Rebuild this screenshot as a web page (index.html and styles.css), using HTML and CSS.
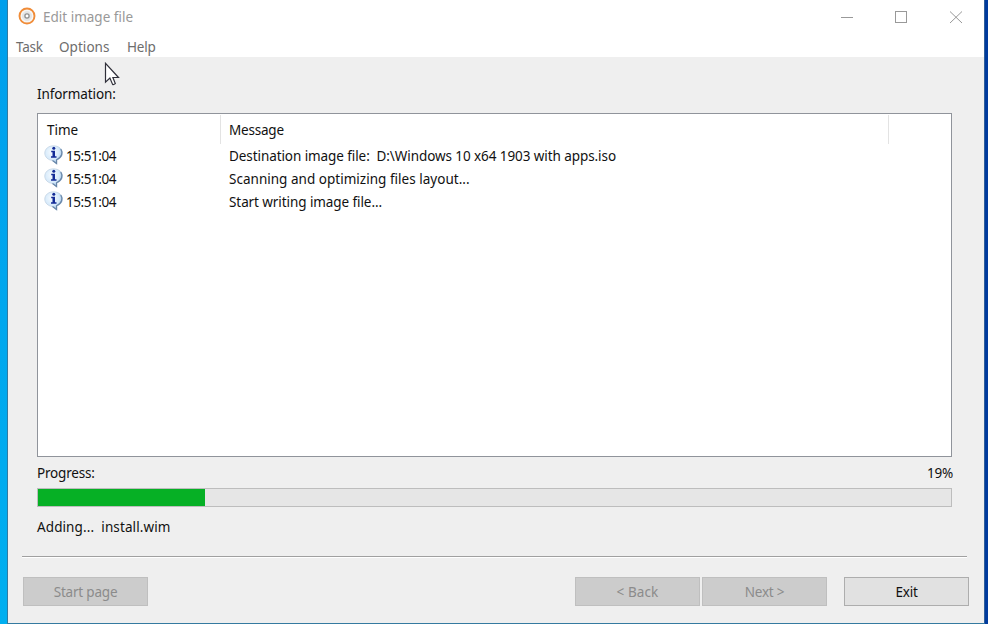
FILE: index.html
```html
<!DOCTYPE html>
<html lang="en">
<head>
<meta charset="utf-8">
<title>Edit image file</title>
<link rel="stylesheet" href="styles.css">
</head>
<body>
<svg class="defs" width="0" height="0" aria-hidden="true">
  <defs>
    <radialGradient id="bubble" cx="0.4" cy="0.35" r="0.7">
      <stop offset="0" stop-color="#f6fbff"/><stop offset="0.6" stop-color="#d5e9fa"/><stop offset="1" stop-color="#83afdb"/>
    </radialGradient>
    <symbol id="info" viewBox="0 0 20 20">
      <path d="M9.5 .8C4.500 .8 .8 4 .8 8.100C.8 12 4.100 15 8.200 15.400L12.300 18.800V15C16 14.100 18.500 11.500 18.500 8.100C18.500 4 14.600 .8 9.500 .8Z" fill="url(#bubble)" stroke="#c3d3e3" stroke-width=".8"/>
      <path d="M16.800 4C18.900 7.500 18.200 12.300 12.600 14.700V18.600L8.500 15.500" fill="none" stroke="#6886a8" stroke-width="1.200"/>
      <circle cx="9.800" cy="3.200" r="1.500" fill="#132b96"/>
      <path d="M7.200 5.800H11V11.300H12.500V12.700H7V11.300H8.500V7.200H7.200Z" fill="#132b96"/>
    </symbol>
  </defs>
</svg>
<div class="desktop">
  <main class="window">
    <header class="titlebar">
      <svg class="app-icon" width="18" height="18" viewBox="0 0 18 18">
        <circle cx="9" cy="9" r="7.500" fill="#f6f6f6" stroke="#f08c38" stroke-width="1.900"/>
        <circle cx="9" cy="9" r="4.600" fill="#e4e4e4" stroke="#e6e6e6" stroke-width="1"/>
        <circle cx="9" cy="9" r="2.100" fill="#fff" stroke="#8f8f8f" stroke-width="1.300"/>
      </svg>
      <span class="title">Edit image file</span>
      <svg class="controls" width="124" height="16" viewBox="0 0 124 16" fill="none" stroke="#999">
        <path d="M1 8.500H13"/>
        <rect x="55.500" y="2.500" width="11" height="11"/>
        <path d="M110 2.500L122 14M122 2.500L110 14"/>
      </svg>
    </header>
    <nav class="menu"><span class="m-task">Task</span><span class="m-options">Options</span><span class="m-help">Help</span></nav>
    <section class="content">
      <div class="label"><span>Information:</span></div>
      <div class="list">
        <div class="head"><div class="c-time"><span>Time</span></div><div class="c-msg"><span>Message</span></div></div>
        <div class="row"><svg class="info" width="20" height="20"><use href="#info"/></svg><span class="clock">15:51:04</span><span class="message">Destination image file:  D:\Windows 10 x64 1903 with apps.iso</span></div>
        <div class="row"><svg class="info" width="20" height="20"><use href="#info"/></svg><span class="clock">15:51:04</span><span class="message wide">Scanning and optimizing files layout...</span></div>
        <div class="row"><svg class="info" width="20" height="20"><use href="#info"/></svg><span class="clock">15:51:04</span><span class="message">Start writing image file...</span></div>
      </div>
      <div class="progress-label"><span>Progress:</span><span>19%</span></div>
      <div class="bar"><div class="fill"></div></div>
      <div class="status"><span>Adding...  install.wim</span></div>
    </section>
    <footer class="footer">
      <button class="btn start" disabled>Start page</button>
      <button class="btn back" disabled>&lt; Back</button>
      <button class="btn next" disabled>Next &gt;</button>
      <button class="btn exit">Exit</button>
    </footer>
  </main>
</div>
<svg class="cursor" width="16" height="24" viewBox="0 0 16 24"><path d="M1.500 1.300V20.200L5.900 16L8.600 22.400Q9.700 23 11.300 21.600L8.900 15.500H14.500Z" fill="#fff" stroke="#30303a" stroke-width="1.200"/></svg>
</body>
</html>
```
FILE: styles.css
```css
* { box-sizing: border-box; }
body {
  margin: 0;
  width: 988px;
  height: 624px;
  overflow: hidden;
  font: 13.5px/20px "Noto Sans", "Open Sans", sans-serif;
  letter-spacing: -0.2px;
  color: #111;
}
.defs { position: absolute; }
span { white-space: pre; }
.desktop {
  height: 624px;
  padding: 0 3px 0 7px;
  background: linear-gradient(90deg, transparent 0 8px, #003b9d 8px), linear-gradient(#009fec, #00aff0);
}
.window {
  height: 624px;
  display: flex;
  flex-direction: column;
  background: #efefef;
  border: solid #347aa0;
  border-width: 0 1px 1px;
  border-right-color: #315f99;
}
.titlebar {
  height: 34px;
  display: flex;
  align-items: center;
  padding: 0 20px 0 10px;
  background: #fff;
  color: #999;
}
.app-icon { margin-bottom: 2px; }
.title { margin-left: 7px; letter-spacing: 0; }
.controls { margin-left: auto; }
.menu {
  height: 23px;
  display: flex;
  padding: 3px 0 0 8px;
  background: #fff;
  color: #6d6d6d;
}
.m-task { width: 43px; }
.m-options { width: 68px; letter-spacing: 0.05px; }
.content { padding: 27px 32px 0 29px; }
.label { height: 29px; letter-spacing: -0.1px; }
.list {
  height: 344px;
  border: 1px solid #90949b;
  background: #fff;
}
.head { display: flex; width: 851px; height: 30px; padding-top: 1px; }
.c-time { width: 183px; padding: 5px 0 0 9px; border-right: 1px solid #e3e3e3; letter-spacing: 0; }
.c-msg { flex: 1; padding: 5px 0 0 8px; border-right: 1px solid #e3e3e3; }
.row { display: flex; height: 23px; padding: 2px 0 0 6px; }
.info { margin-top: -1px; flex: none; }
.clock { width: 165px; padding-left: 2px; letter-spacing: -0.45px; }
.message { letter-spacing: -0.08px; }
.message.wide { letter-spacing: 0.02px; }
.progress-label { display: flex; justify-content: space-between; padding-top: 6px; height: 31px; margin-right: -1px; }
.bar { height: 19px; border: 1px solid #bdbdbd; background: #e6e6e6; }
.fill { width: 167px; height: 17px; background: #06b025; }
.status { padding-top: 10px; height: 49px; letter-spacing: 0.1px; }
.footer {
  display: flex;
  margin: 0 17px 0 14px;
  border-top: 1px solid #a0a0a0;
  box-shadow: inset 0 1px #fff;
  padding: 20px 0 0 1px;
}
.btn {
  width: 125px;
  height: 29px;
  padding: 0;
  flex: none;
  border: 1px solid #adadad;
  background: #e1e1e1;
  font: inherit;
  letter-spacing: inherit;
  color: #111;
}
.btn:disabled { background: #ccc; border-color: #bfbfbf; color: #8b8b8b; }
.back { margin-left: 427px; letter-spacing: 0.1px; }
.next { margin-left: 2px; }
.exit { margin-left: 17px; }
.cursor { position: absolute; left: 104px; top: 62px; }
```
